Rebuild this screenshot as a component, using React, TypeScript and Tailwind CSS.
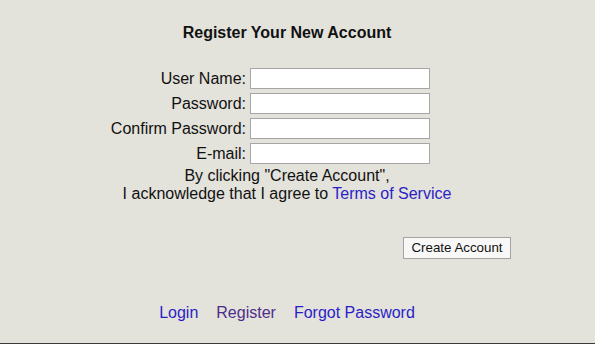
export default function App() {
  const fields = ["User Name:", "Password:", "Confirm Password:", "E-mail:"];

  return (
    <div className="relative h-[344px] w-[595px] bg-[#e3e2db] font-['Liberation_Sans',Arial,sans-serif] text-[16px] text-[#111]">
      <div className="w-[574px] pt-[24px] text-center text-[16px] font-bold leading-[18px]">
        Register Your New Account
      </div>

      <div className="ml-[107px] mt-[26px] grid w-[323px] grid-cols-[139px_180px] gap-x-[4px] gap-y-[4px]">
        {fields.map((f) => (
          <div key={f} className="contents">
            <label className="flex items-center justify-end leading-[18px]">{f}</label>
            <input
              type={f.startsWith("Pass") || f.startsWith("Conf") ? "password" : "text"}
              className="h-[21px] w-[180px] border border-[#a6a6a6] bg-white outline-none"
            />
          </div>
        ))}
      </div>

      <div className="mt-[3px] w-[574px] text-center leading-[18px]">
        <div>By clicking "Create Account",</div>
        <div>
          I acknowledge that I agree to <a className="text-[#2a1ec8]">Terms of Service</a>
        </div>
      </div>

      <div className="mt-[34px] flex w-[511px] justify-end">
        <button className="h-[22px] w-[108px] border border-[#a3a3a3] bg-[#f8f8f8] text-[13.33px] leading-[16px] text-[#111]">
          Create Account
        </button>
      </div>

      <div className="mt-[45px] flex w-[574px] justify-center gap-[18px] leading-[18px]">
        <a className="text-[#2a1ec8]">Login</a>
        <a className="text-[#4e2d8a]">Register</a>
        <a className="text-[#2a1ec8]">Forgot Password</a>
      </div>

      <div className="absolute bottom-0 left-0 h-[1px] w-full bg-[#3a3a3a]" />
    </div>
  );
}
